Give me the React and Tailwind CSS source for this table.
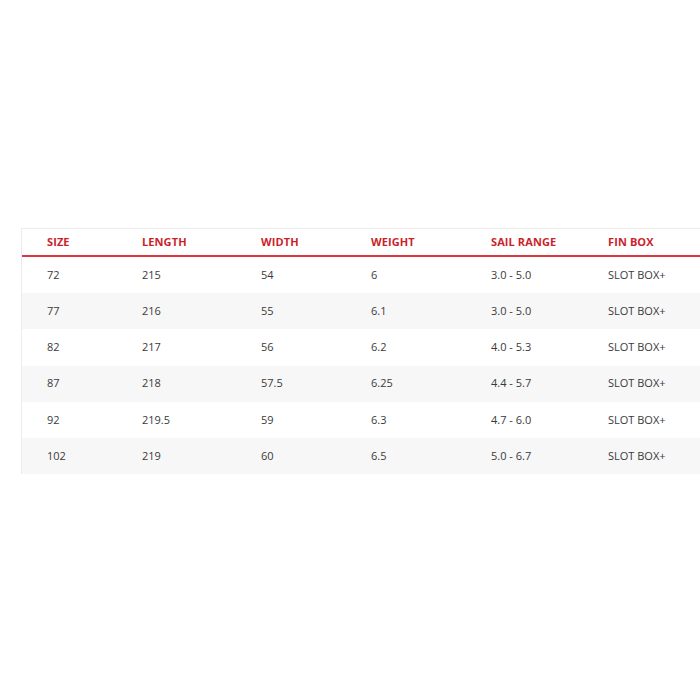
const cols = [
  { label: "SIZE", w: "w-[95px]" },
  { label: "LENGTH", w: "w-[119px]" },
  { label: "WIDTH", w: "w-[110px]" },
  { label: "WEIGHT", w: "w-[120px]" },
  { label: "SAIL RANGE", w: "w-[117px]" },
  { label: "FIN BOX", w: "w-[140px]" },
];

const rows = [
  ["72", "215", "54", "6", "3.0 - 5.0", "SLOT BOX+"],
  ["77", "216", "55", "6.1", "3.0 - 5.0", "SLOT BOX+"],
  ["82", "217", "56", "6.2", "4.0 - 5.3", "SLOT BOX+"],
  ["87", "218", "57.5", "6.25", "4.4 - 5.7", "SLOT BOX+"],
  ["92", "219.5", "59", "6.3", "4.7 - 6.0", "SLOT BOX+"],
  ["102", "219", "60", "6.5", "5.0 - 6.7", "SLOT BOX+"],
];

export default function App() {
  return (
    <div className="w-[700px] h-[700px] bg-white overflow-hidden font-['Open_Sans',sans-serif]">
      <div className="pt-[228px] pl-[21px]">
        <div className="w-[720px] border-l border-t border-[#ececec]">
          {/* header */}
          <div className="flex h-[28px] items-center border-b-2 border-[#d9383f]">
            {cols.map((c) => (
              <div
                key={c.label}
                className={`${c.w} shrink-0 pl-[25px] text-[11px] font-bold text-[#cc1f2b] tracking-[0.1px]`}
              >
                {c.label}
              </div>
            ))}
          </div>

          {rows.map((r, i) => (
            <div
              key={r[0]}
              className={`flex h-[36.2px] items-center ${i % 2 === 1 ? "bg-[#f7f7f7]" : "bg-white"}`}
            >
              {r.map((v, j) => (
                <div
                  key={j}
                  className={`${cols[j].w} shrink-0 pl-[25px] text-[11px] text-[#3a3a3a]`}
                >
                  {v}
                </div>
              ))}
            </div>
          ))}
        </div>
      </div>
    </div>
  );
}
